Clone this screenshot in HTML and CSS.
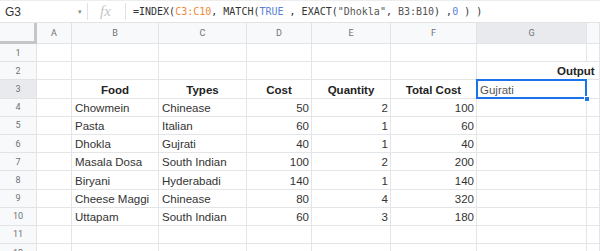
FILE: index.html
```html
<!DOCTYPE html>
<html>
<head>
    <title>Sheet - Output lookup</title>
    <link rel="stylesheet" href="styles.css">
</head>
<body>
    <div class="formula-bar">
        <div class="name-box">G3<span class="caret">&#9662;</span></div>
        <div class="fx">fx</div>
        <div class="formula">=INDEX(<span class="ref">C3:C10</span>, MATCH(<span class="bool">TRUE</span> , EXACT(<span class="str">"Dhokla"</span>, <span class="str">B3:B10</span>) ,<span class="bool">0</span> ) )</div>
    </div>

    <div class="sheet">
        <!-- column headers -->
        <div class="corner"></div>
        <div class="ch">A</div>
        <div class="ch">B</div>
        <div class="ch">C</div>
        <div class="ch">D</div>
        <div class="ch">E</div>
        <div class="ch">F</div>
        <div class="ch active">G</div>
        <div class="ch"></div>

        <!-- row 1 -->
        <div class="rh">1</div>
        <div class="c"></div><div class="c"></div><div class="c"></div><div class="c"></div>
        <div class="c"></div><div class="c"></div><div class="c"></div><div class="c"></div>

        <!-- row 2 -->
        <div class="rh">2</div>
        <div class="c"></div><div class="c"></div><div class="c"></div><div class="c"></div>
        <div class="c"></div><div class="c"></div>
        <div class="c output">Output</div>

        <!-- row 3 -->
        <div class="rh active">3</div>
        <div class="c"></div>
        <div class="c hd">Food</div>
        <div class="c hd">Types</div>
        <div class="c hd">Cost</div>
        <div class="c hd">Quantity</div>
        <div class="c hd">Total Cost</div>
        <div class="c sel">Gujrati<span class="handle"></span></div>
        <div class="c"></div>

        <!-- row 4 -->
        <div class="rh">4</div>
        <div class="c"></div>
        <div class="c">Chowmein</div>
        <div class="c">Chinease</div>
        <div class="c num">50</div>
        <div class="c num">2</div>
        <div class="c num">100</div>
        <div class="c"></div><div class="c"></div>

        <!-- row 5 -->
        <div class="rh">5</div>
        <div class="c"></div>
        <div class="c">Pasta</div>
        <div class="c">Italian</div>
        <div class="c num">60</div>
        <div class="c num">1</div>
        <div class="c num">60</div>
        <div class="c"></div><div class="c"></div>

        <!-- row 6 -->
        <div class="rh">6</div>
        <div class="c"></div>
        <div class="c">Dhokla</div>
        <div class="c">Gujrati</div>
        <div class="c num">40</div>
        <div class="c num">1</div>
        <div class="c num">40</div>
        <div class="c"></div><div class="c"></div>

        <!-- row 7 -->
        <div class="rh">7</div>
        <div class="c"></div>
        <div class="c">Masala Dosa</div>
        <div class="c">South Indian</div>
        <div class="c num">100</div>
        <div class="c num">2</div>
        <div class="c num">200</div>
        <div class="c"></div><div class="c"></div>

        <!-- row 8 -->
        <div class="rh">8</div>
        <div class="c"></div>
        <div class="c">Biryani</div>
        <div class="c">Hyderabadi</div>
        <div class="c num">140</div>
        <div class="c num">1</div>
        <div class="c num">140</div>
        <div class="c"></div><div class="c"></div>

        <!-- row 9 -->
        <div class="rh">9</div>
        <div class="c"></div>
        <div class="c">Cheese Maggi</div>
        <div class="c">Chinease</div>
        <div class="c num">80</div>
        <div class="c num">4</div>
        <div class="c num">320</div>
        <div class="c"></div><div class="c"></div>

        <!-- row 10 -->
        <div class="rh">10</div>
        <div class="c"></div>
        <div class="c">Uttapam</div>
        <div class="c">South Indian</div>
        <div class="c num">60</div>
        <div class="c num">3</div>
        <div class="c num">180</div>
        <div class="c"></div><div class="c"></div>

        <!-- row 11 -->
        <div class="rh">11</div>
        <div class="c"></div><div class="c"></div><div class="c"></div><div class="c"></div>
        <div class="c"></div><div class="c"></div><div class="c"></div><div class="c"></div>

        <!-- row 12 -->
        <div class="rh">12</div>
        <div class="c"></div><div class="c"></div><div class="c"></div><div class="c"></div>
        <div class="c"></div><div class="c"></div><div class="c"></div><div class="c"></div>
    </div>
</body>
</html>
```

FILE: styles.css
```css
* {
    box-sizing: border-box;
}

body {
    margin: 0;
    background: #fff;
    font-family: "Liberation Sans", Arial, sans-serif;
    color: #222;
    overflow: hidden;
}

/* formula bar */

.formula-bar {
    height: 23px;
    display: flex;
    align-items: center;
    border-top: 1px solid #eceded;
    border-bottom: 1px solid #e1e3e5;
}

.name-box {
    width: 88px;
    height: 17px;
    padding-left: 5px;
    display: flex;
    align-items: center;
    font-size: 12px;
    color: #333;
    border-right: 1px solid #e1e3e5;
}

.caret {
    margin-left: auto;
    margin-right: 5px;
    font-size: 7px;
    color: #888;
}

.fx {
    width: 38px;
    height: 17px;
    padding-left: 12px;
    font-family: "Liberation Serif", serif;
    font-style: italic;
    font-size: 15px;
    line-height: 16px;
    color: #c3c6c9;
    border-right: 1px solid #e1e3e5;
}

.formula {
    padding-left: 7px;
    font-family: "DejaVu Sans Mono", monospace;
    font-size: 10px;
    color: #333;
    white-space: pre;
}

.ref {
    color: #f0883a;
}

.bool {
    color: #5b7fd6;
}

.str {
    color: #555;
}

/* grid */

.sheet {
    display: grid;
    grid-template-columns: 37px 35px 87px 88px 65px 79px 86px 110px 1fr;
    grid-template-rows: 21px repeat(12, 18.2px);
}

.corner {
    background: #f8f9fa;
    border-right: 3px solid #c4c7ca;
    border-bottom: 3px solid #c4c7ca;
}

.ch {
    background: #f8f9fa;
    border-right: 1px solid #e1e3e5;
    border-bottom: 1px solid #e1e3e5;
    display: flex;
    align-items: center;
    justify-content: center;
    font-family: Roboto, sans-serif;
    font-size: 9px;
    color: #6f7175;
}

.rh {
    background: #f8f9fa;
    border-right: 1px solid #e1e3e5;
    border-bottom: 1px solid #e1e3e5;
    display: flex;
    align-items: center;
    justify-content: center;
    font-family: Roboto, sans-serif;
    font-size: 9px;
    color: #6f7175;
}

.ch.active,
.rh.active {
    background: #e8eaed;
}

.c {
    border-right: 1px solid #e4e5e6;
    border-bottom: 1px solid #e4e5e6;
    display: flex;
    align-items: flex-end;
    padding: 0 3px 1px;
    font-size: 11.5px;
    line-height: 14px;
    white-space: nowrap;
    color: #333;
}

.num {
    justify-content: flex-end;
    padding-right: 2px;
}

.hd {
    justify-content: center;
    font-weight: bold;
    color: #222;
}

.output {
    grid-column: span 2;
    padding-left: 80px;
    font-weight: bold;
    color: #222;
}

.sel {
    position: relative;
    color: #555;
}

.sel::after {
    content: "";
    position: absolute;
    left: -1px;
    top: -1px;
    right: -1px;
    bottom: -1px;
    border: 2px solid #1a73e8;
}

.handle {
    position: absolute;
    right: -4px;
    bottom: -4px;
    width: 6px;
    height: 6px;
    background: #1a73e8;
    border: 1px solid #fff;
    z-index: 1;
}
```
